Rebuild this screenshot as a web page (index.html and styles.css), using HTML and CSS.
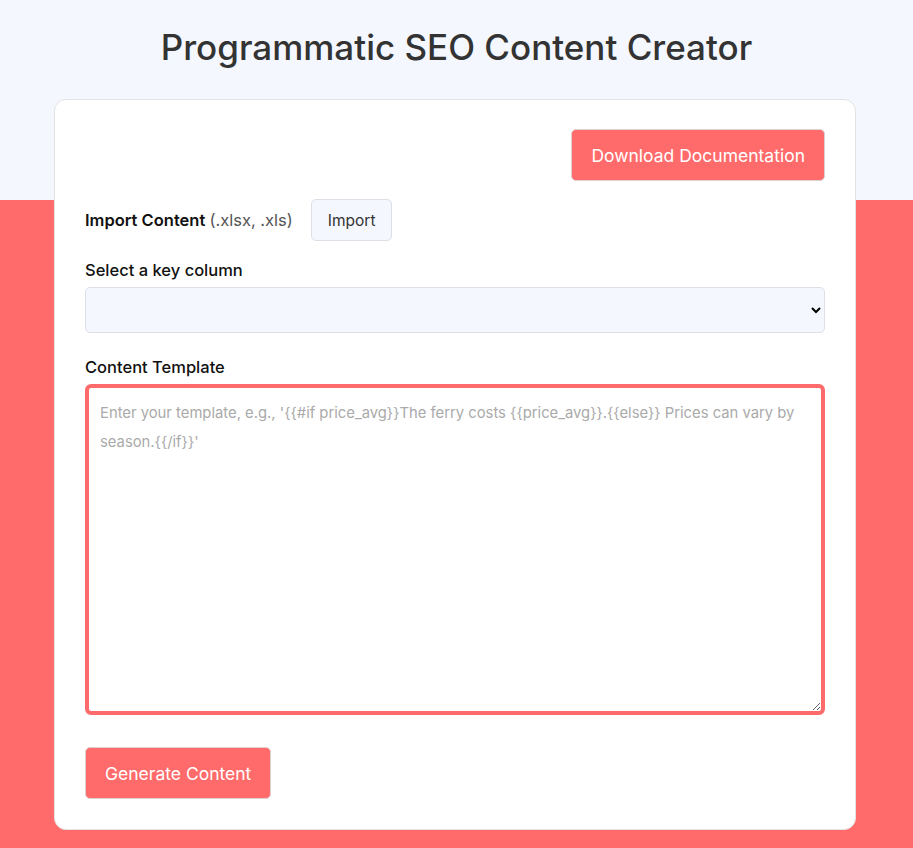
FILE: index.html
```html
<!DOCTYPE html>
<html>
<head>
<meta charset="utf-8">
<link rel="stylesheet" href="styles.css">
</head>
<body>
<h1 class="title">Programmatic SEO Content Creator</h1>
<main class="card">
  <div class="doc-row">
    <button class="btn btn-primary">Download Documentation</button>
  </div>
  <div class="import-row">
    <span class="label">Import Content <span class="hint">(.xlsx, .xls)</span></span>
    <button class="btn btn-light">Import</button>
  </div>
  <label class="label field-label">Select a key column</label>
  <select class="select"></select>
  <label class="label field-label">Content Template</label>
  <textarea class="template" placeholder="Enter your template, e.g., '{{#if price_avg}}The ferry costs {{price_avg}}.{{else}} Prices can vary by season.{{/if}}'"></textarea>
  <div class="gen-row">
    <button class="btn btn-primary">Generate Content</button>
  </div>
</main>
</body>
</html>
```
FILE: styles.css
```css
* { box-sizing: border-box; }
html, body { margin: 0; padding: 0; }
body {
  font-family: "Inter", "Lato", sans-serif;
  background: linear-gradient(to bottom, #f4f7fe 0, #f4f7fe 200px, #ff6b6b 200px, #ff6b6b 100%);
  min-height: 848px;
  padding-top: 25px;
}
.title {
  margin: 0;
  text-align: center;
  font-size: 35px;
  font-weight: 500;
  color: #333;
  line-height: 44px;
}
.card {
  width: 802px;
  margin: 30px 0 0 54px;
  background: #fff;
  border: 1px solid #e3e3e3;
  border-radius: 12px;
  padding: 29px 30px 30px;
  display: flex;
  flex-direction: column;
}
.btn {
  font-family: inherit;
  border-radius: 5px;
  cursor: pointer;
}
.btn-primary {
  background: #ff6b6b;
  color: #fff;
  border: 1px solid #e0d0d0;
  font-size: 17.5px;
  height: 52px;
  padding: 0 19px;
}
.btn-light {
  background: #f4f7fe;
  color: #333;
  border: 1px solid #dcdfe6;
  font-size: 15.5px;
  height: 42px;
  padding: 0 16px;
}
.doc-row { display: flex; justify-content: flex-end; }
.import-row {
  display: flex;
  align-items: center;
  gap: 18px;
  margin-top: 18px;
}
.label {
  font-size: 16.5px;
  font-weight: 600;
  color: #111;
}
.hint { font-weight: 400; color: #555; }
.field-label { display: block; margin-top: 19px; margin-bottom: 7px; font-weight: 500; }
.select {
  display: block;
  width: 100%;
  height: 46px;
  background: #f4f7fe;
  border: 1px solid #dcdfe6;
  border-radius: 5px;
  font-family: inherit;
  font-size: 16px;
  margin-bottom: 5px;
}
.template {
  display: block;
  width: 100%;
  height: 331px;
  border: 4px solid #ff6b6b;
  border-radius: 6px;
  padding: 11px 11px;
  font-family: inherit;
  font-size: 14.8px;
  line-height: 29px;
  color: #333;
  outline: none;
  resize: vertical;
}
.template::placeholder { color: #aaa; }
.gen-row { margin-top: 32px; display: flex; }
```
